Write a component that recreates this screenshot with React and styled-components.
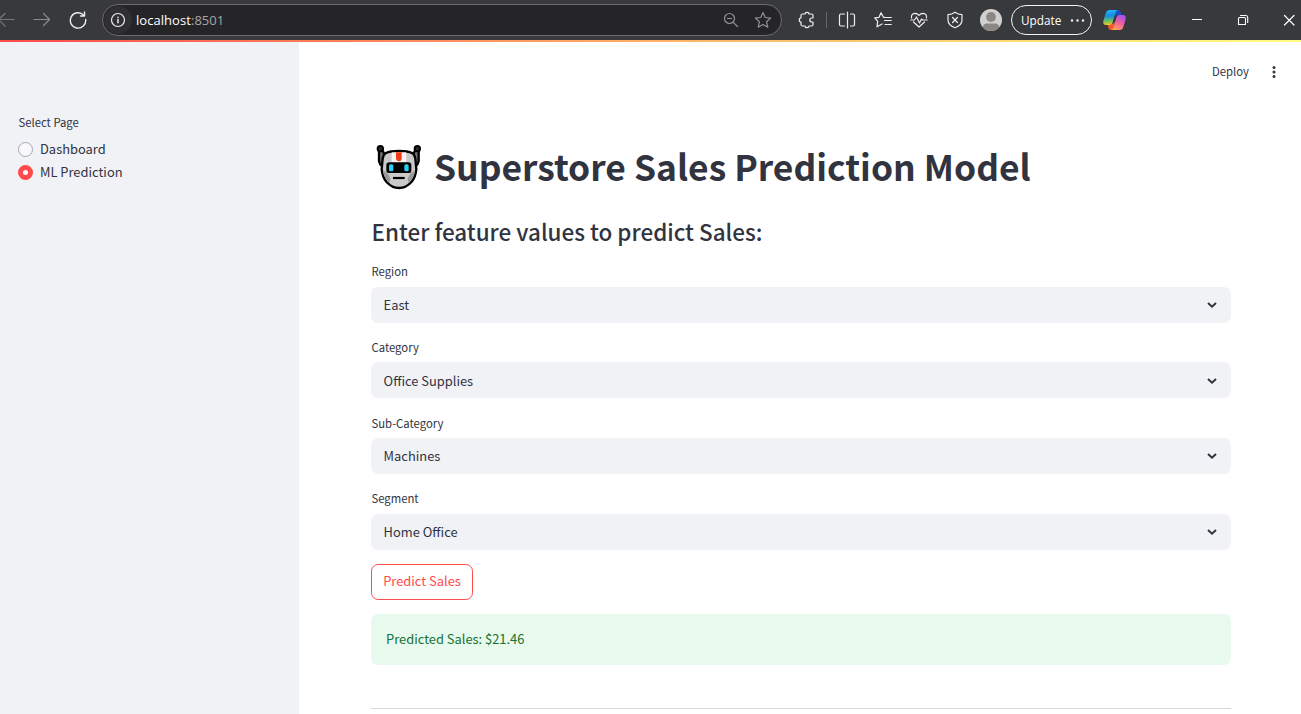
import React from "react";
import styled, { createGlobalStyle, css } from "styled-components";

const GlobalStyle = createGlobalStyle`
  * { box-sizing: border-box; }
  html, body, #root { height: 100%; }
  body {
    margin: 0;
    overflow: hidden;
    background: #fff;
    color: #31333f;
    font-family: "Noto Sans CJK SC", "Noto Sans", sans-serif;
    font-size: 12.9px;
  }
`;

const Window = styled.div`
  display: flex;
  flex-direction: column;
  height: 714px;
  width: 1301px;
  overflow: hidden;
`;

/* Browser chrome */
const BrowserBar = styled.header`
  flex: none;
  display: flex;
  align-items: center;
  height: 40px;
  background: #38393d;
  color: #e8e8e8;
  font-family: "Open Sans", "Noto Sans", sans-serif;
`;

const Icon = styled.svg`
  flex: none;
  display: block;
  width: ${(p) => p.$size || 18}px;
  height: ${(p) => p.$size || 18}px;
  margin-left: ${(p) => p.$gap || 0}px;
  fill: none;
  stroke: ${(p) => p.$color || "#eeeeee"};
  stroke-width: ${(p) => p.$weight || 1.2};
  stroke-linecap: round;
  stroke-linejoin: round;
`;

const AddressBar = styled.div`
  display: flex;
  align-items: center;
  width: 680px;
  height: 32px;
  margin-left: 15px;
  padding: 0 9px 0 1px;
  border: 1px solid #6c6d70;
  border-radius: 16px;
  background: #252527;
`;

const SiteInfo = styled.div`
  display: grid;
  place-items: center;
  width: 28px;
  height: 28px;
  border-radius: 50%;
  background: #303033;
`;

const Url = styled.div`
  flex: 1;
  margin-left: 4px;
  font-size: 13px;
  line-height: 18px;
  color: #a5a5a6;
  letter-spacing: 0.05px;
  b { font-weight: 400; color: #fff; }
`;

const Divider = styled.div`
  width: 1px;
  height: 16px;
  margin-left: 10px;
  background: #65666a;
`;

const UpdateButton = styled.div`
  display: flex;
  align-items: center;
  width: 81px;
  height: 30px;
  margin-left: 9px;
  padding: 0 0 1px 9px;
  border: 1px solid #f4f4f4;
  border-radius: 15px;
  color: #fff;
  font-size: 11.8px;
  line-height: 18px;
`;

const LoadingStripe = styled.div`
  flex: none;
  height: 2px;
  background: linear-gradient(90deg, #ff4b4b, #ffb066 50%, #fffd80);
`;

/* App */
const Page = styled.div`
  flex: 1;
  display: flex;
  min-height: 0;
`;

const Sidebar = styled.aside`
  flex: none;
  width: 299px;
  padding: 70.15px 18px 0;
  background: #f0f2f6;
`;

const Label = styled.div`
  height: 21.6px;
  margin-top: -0.15px;
  margin-bottom: 3.75px;
  padding-left: 0.5px;
  font-size: 11.3px;
  line-height: 21.6px;
`;

const RadioRow = styled.div`
  display: flex;
  align-items: center;
  gap: 7px;
  height: 23px;
  line-height: 23px;
`;

const RadioDot = styled.span`
  width: 15px;
  height: 15px;
  margin-top: 1.6px;
  border-radius: 50%;
  border: 1px solid #a3a8b4;
  background: #f9f9fb;
  ${(p) => p.$checked && css`
    border: 5px solid #ff4b4b;
    background: #fff;
  `}
`;

const Main = styled.main`
  flex: 1;
  display: flex;
  flex-direction: column;
`;

const AppHeader = styled.div`
  display: flex;
  justify-content: flex-end;
  align-items: center;
  height: 60px;
  padding-right: 18px;
  font-size: 11.3px;
  line-height: 20px;
`;

const DeployLabel = styled.span`
  padding-bottom: 2px;
`;

const Content = styled.div`
  display: flex;
  flex-direction: column;
  width: 860px;
  margin-left: 72px;
  padding-top: 40px;
`;

const Title = styled.h1`
  display: flex;
  align-items: center;
  height: 48px;
  margin: 0 0 23.2px;
  padding-left: 5px;
  font-size: 35.42px;
  line-height: 48px;
  font-weight: 700;
  white-space: nowrap;
  svg { margin-top: 2px; }
  span { margin-left: 12px; }
`;

const Subtitle = styled.h3`
  height: 36px;
  margin: 0 0 12.4px;
  padding-left: 0.5px;
  font-size: 22.45px;
  line-height: 36px;
  font-weight: 500;
  white-space: nowrap;
`;

const Field = styled.div`
  display: flow-root;
  margin-bottom: 14.4px;
`;

const SelectBox = styled.div`
  display: flex;
  align-items: center;
  justify-content: space-between;
  height: 36px;
  padding: 0.6px 13px 0 12.6px;
  border-radius: 7.2px;
  background: #f0f2f6;
  line-height: 36px;
`;

const PredictButton = styled.button`
  align-self: flex-start;
  width: 102px;
  height: 36px;
  padding: 0 0 2px;
  border: 1px solid #ff4b4b;
  border-radius: 7.2px;
  background: #fff;
  color: #ff4b4b;
  font: inherit;
  line-height: 32px;
`;

const Success = styled.div`
  height: 50.4px;
  margin-top: 14.4px;
  padding-left: 15px;
  border-radius: 7.2px;
  background: #e8f9ee;
  color: #177233;
  line-height: 50.4px;
`;

const Rule = styled.hr`
  width: 100%;
  height: 1px;
  margin: 43.2px 0 0;
  border: 0;
  background: #d6d6d8;
`;

const Robot = () => (
  <svg width="46" height="46" viewBox="18 18 138 138">
    <path d="M27 34V70Q29 80 36 84L44 78V50L36 34Z" fill="#747474" stroke="#000" strokeWidth="7" strokeLinejoin="round" />
    <path d="M146 34V70Q144 80 137 84L129 78V50L137 34Z" fill="#747474" stroke="#000" strokeWidth="7" strokeLinejoin="round" />
    <circle cx="31" cy="32" r="8" fill="#2c2c2c" stroke="#000" strokeWidth="6" />
    <circle cx="142" cy="32" r="8" fill="#2c2c2c" stroke="#000" strokeWidth="6" />
    <path d="M48 45Q60 39 87 39T126 45Q134 49 136 62L139 94Q137 116 125 131Q108 150 87 150T49 131Q37 116 35 94L38 62Q40 49 48 45Z" fill="#cacaca" stroke="#000" strokeWidth="7" />
    <path d="M39 97L52 106L61 121L58 135Q41 119 39 97ZM135 97L122 106L113 121L116 135Q133 119 135 97Z" fill="#999" />
    <path d="M65 43H109V73H65Z" fill="#f4f4f4" />
    <path d="M78 43H95V61Q95 70 87 70T78 61Z" fill="#f03a17" />
    <path d="M59 73H115Q124 73 124 81V98Q124 105 115 105H59Q49 105 49 98V81Q49 73 59 73Z" fill="#000" />
    <rect x="57" y="79" width="13" height="21" rx="5" fill="#29cef5" />
    <rect x="103" y="79" width="13" height="21" rx="5" fill="#29cef5" />
    <path d="M69 120H104" stroke="#000" strokeWidth="6.500" />
  </svg>
);

const CopilotSvg = styled.svg`
  flex: none;
  margin-left: 11px;
`;

const Copilot = () => (
  <CopilotSvg width="23" height="22" viewBox="0 0 23 22">
    <defs>
      <linearGradient id="cool" x1="0" y1="0" x2="0" y2="1">
        <stop offset="0" stopColor="#20b5f5" />
        <stop offset=".4" stopColor="#168bdf" />
        <stop offset=".7" stopColor="#62bd70" />
        <stop offset="1" stopColor="#f1c91c" />
      </linearGradient>
      <linearGradient id="warm" x1=".7" y1="0" x2=".3" y2="1">
        <stop offset="0" stopColor="#a550ee" />
        <stop offset=".5" stopColor="#ef609b" />
        <stop offset="1" stopColor="#ffa35b" />
      </linearGradient>
    </defs>
    <path d="M12 1H15.500Q17 1 17.800 3.500L18.500 6H14Q12 6 11.200 9Z" fill="#1750c7" />
    <path d="M11 21H7.500Q6 21 5.300 18.500L4.500 15H9Q11 15 11.800 12Z" fill="#f0582f" />
    <path d="M6.500 1H15Q13 1 12.300 4L9.700 13Q9 16 6.500 16H3Q-.5 16 .5 11.500L2.500 4.500Q3.500 1 6.500 1Z" fill="url(#cool)" />
    <path d="M16.500 21H8Q10 21 10.700 18L13.300 9Q14 6 16.500 6H20Q23.500 6 22.500 10.500L20.500 17.500Q19.500 21 16.500 21Z" fill="url(#warm)" />
  </CopilotSvg>
);

const AvatarSvg = styled.svg`
  flex: none;
  margin-left: 16px;
`;

const Avatar = () => (
  <AvatarSvg width="22" height="22" viewBox="0 0 22 22">
    <clipPath id="face"><circle cx="11" cy="11" r="11" /></clipPath>
    <g clipPath="url(#face)">
      <rect width="22" height="22" fill="#d2d0ce" />
      <circle cx="11" cy="8" r="4.9" fill="#8b8785" />
      <path d="M3 22V18Q3 14.500 7 14.500H15Q19 14.500 19 18V22Z" fill="#8b8785" />
    </g>
  </AvatarSvg>
);

const Browser = () => (
  <BrowserBar>
    <Icon $color="#77787b" $gap={-3}><path d="M17 8.500H2M8 2.500L1.500 8.500L8 15" /></Icon>
    <Icon $color="#8b8c8f" $gap={18}><path d="M1 8.500H16.500M10.500 2.500L16.500 8.500L10.500 14.500" /></Icon>
    <Icon $gap={18} $weight={1.4}><path d="M16.700 8.500A7.700 7.700 0 1 1 14.700 4.200M15.500 1V5H11.500" /></Icon>
    <AddressBar>
      <SiteInfo>
        <Icon $size={16}><circle cx="8" cy="8" r="6.500" /><path d="M8 7.500V10.700M8 5.300V5.400" strokeWidth="1.500" /></Icon>
      </SiteInfo>
      <Url><b>localhost</b>:8501</Url>
      <Icon $size={16} $color="#929293"><circle cx="6.500" cy="6.500" r="5" /><path d="M4.500 6.500H8.500M10.300 10.300L14.500 14.500" /></Icon>
      <Icon $gap={15} $color="#929293"><path d="M9 1.500L11.200 6.500L16.700 7.100L12.600 10.800L13.800 16.200L9 13.400L4.200 16.200L5.400 10.800L1.300 7.100L6.800 6.500Z" /></Icon>
    </AddressBar>
    <Icon $gap={16} $weight={1.2}><path d="M4.500 3H7Q7 1.300 9 1.300T11 3H13.500Q15 3 15 4.500V7H14Q11.800 7 11.800 9T14 11H15V13.500Q15 15 13.500 15H11Q11 16.700 9 16.700T7 15H4.500Q3 15 3 13.500V11Q1.300 11 1.300 9T3 7V4.500Q3 3 4.500 3Z" /></Icon>
    <Divider />
    <Icon $gap={11}><path d="M6.500 3H3Q1.500 3 1.500 4.500V13.500Q1.500 15 3 15H6.500M9.500 1V17M12.500 3H15Q16.500 3 16.500 4.500V13.500Q16.500 15 15 15H12.500" /></Icon>
    <Icon $gap={18}><path d="M11 6.300H9.500L7 1.700L5 6.300L.8 6.900L3.700 10.400L3 15.800L8 13M11 6.500H17.300M10.500 9.500H17.300M11 13.500H17.300" /></Icon>
    <Icon $gap={18}><path d="M1.500 7Q1 2.500 5 2.400Q7.500 2.400 9 4.500Q10.500 2.400 13 2.400Q17 2.500 16.500 7M.8 9H4.500L6.500 6L9.500 12L11.500 8L12.500 9H17.200M3.500 11L9 16L14.500 11" /></Icon>
    <Icon $gap={18}><path d="M9 1.300Q12 3.600 16 3.600V9Q16 14.200 9 16.800Q2 14.200 2 9V3.600Q6 3.600 9 1.300ZM6.600 6.500L11.400 11.500M11.400 6.500L6.600 11.500" /></Icon>
    <Avatar />
    <UpdateButton>
      Update
      <Icon $gap={8} $weight={2.5}><path d="M3 9.500H3.010M8.500 9.500H8.510M14 9.500H14.010" /></Icon>
    </UpdateButton>
    <Copilot />
    <Icon $gap={62} $weight={1} $color="#fff"><path d="M4 8.500H14" strokeLinecap="butt" /></Icon>
    <Icon $gap={28} $weight={1.1} $color="#fff"><path d="M5.500 6.500H10.500Q11.500 6.500 11.500 7.500V13.500H4.500V7.500Q4.500 6.500 5.500 6.500ZM6.500 4.500H12Q13.700 4.500 13.700 6.500V11.500" /></Icon>
    <Icon $gap={28} $weight={1.2} $color="#fff"><path d="M4.500 4.500L14 14M14 4.500L4.500 14" /></Icon>
  </BrowserBar>
);

const fields = [
  ["Region", "East"],
  ["Category", "Office Supplies"],
  ["Sub-Category", "Machines"],
  ["Segment", "Home Office"],
];

export default function App() {
  return (
    <Window>
      <GlobalStyle />
      <Browser />
      <LoadingStripe />
      <Page>
        <Sidebar>
          <Label>Select Page</Label>
          <RadioRow><RadioDot />Dashboard</RadioRow>
          <RadioRow><RadioDot $checked />ML Prediction</RadioRow>
        </Sidebar>
        <Main>
          <AppHeader>
            <DeployLabel>Deploy</DeployLabel>
            <Icon $gap={16} $weight={3} $color="#31333f"><path d="M9 4.500H9.010M9 9H9.010M9 13.500H9.010" /></Icon>
          </AppHeader>
          <Content>
            <Title><Robot /><span>Superstore Sales Prediction Model</span></Title>
            <Subtitle>Enter feature values to predict Sales:</Subtitle>
            {fields.map(([label, value]) => (
              <Field key={label}>
                <Label>{label}</Label>
                <SelectBox>
                  {value}
                  <Icon $size={12} $weight={2} $color="#31333f"><path d="M2 3.900L6 7.700L10 3.900" strokeLinecap="butt" strokeLinejoin="miter" /></Icon>
                </SelectBox>
              </Field>
            ))}
            <PredictButton>Predict Sales</PredictButton>
            <Success>Predicted Sales: $21.46</Success>
            <Rule />
          </Content>
        </Main>
      </Page>
    </Window>
  );
}
